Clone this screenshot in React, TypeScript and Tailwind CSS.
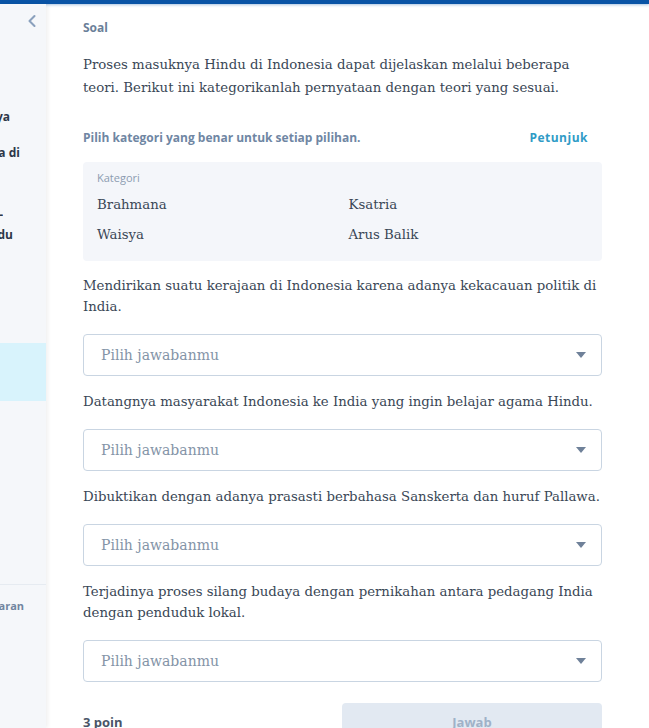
import { ChevronLeft } from "lucide-react";

const serif = "font-['DejaVu_Serif',serif]";
const sans = "font-['Open_Sans',sans-serif]";

const statements = [
  "Mendirikan suatu kerajaan di Indonesia karena adanya kekacauan politik di India.",
  "Datangnya masyarakat Indonesia ke India yang ingin belajar agama Hindu.",
  "Dibuktikan dengan adanya prasasti berbahasa Sanskerta dan huruf Pallawa.",
  "Terjadinya proses silang budaya dengan pernikahan antara pedagang India dengan penduduk lokal.",
];

function SideLine({ text, className = "" }: { text: string; className?: string }) {
  return (
    <div className={`flex justify-end overflow-hidden whitespace-nowrap ${className}`}>
      <span>{text}</span>
    </div>
  );
}

function Select() {
  return (
    <div className="flex h-[42px] items-center justify-between rounded border border-[#c9d5e2] bg-white pl-[17px] pr-[15px]">
      <span className={`${serif} text-[14px] text-[#8494a7]`}>Pilih jawabanmu</span>
      <svg width="10" height="6" viewBox="0 0 10 6">
        <path d="M0 0h10L5 6z" fill="#6f8199" />
      </svg>
    </div>
  );
}

export default function App() {
  return (
    <div className="h-[728px] w-[649px] overflow-hidden bg-white">
      <div className="h-[4px] bg-[#0a54a6] shadow-[0_1px_3px_rgba(10,84,166,0.35)]" />
      <div className="flex h-[724px]">
        {/* sidebar */}
        <aside className={`${sans} relative w-[46px] shrink-0 bg-[#f5f7fa] shadow-[2px_0_4px_rgba(0,0,0,0.06)]`}>
          <div className="flex justify-end pr-[4px] pt-[7px]">
            <ChevronLeft size={20} strokeWidth={2.5} className="text-[#8aa0bd]" />
          </div>
          <div className="pr-[36px] pt-[77px] text-[12px] font-bold text-[#2d3748]">
            <SideLine text="Kedatangan Hindu Budha ke Indonesia ya" />
          </div>
          <div className="pr-[26px] pt-[18px] text-[12px] font-bold text-[#2d3748]">
            <SideLine text="Masuknya agama Hindu Budha di Indonesia di" />
          </div>
          <div className="pr-[43px] pt-[43px] text-[12px] font-bold leading-[20px] text-[#2d3748]">
            <SideLine text="Teori -" />
          </div>
          <div className="pr-[33px] text-[12px] font-bold leading-[20px] text-[#2d3748]">
            <SideLine text="Hindu" />
          </div>
          <div className="mt-[98px] h-[58px] bg-[#d8f3fc]" />
          <div className="mt-[183px] border-t border-[#e6ebf1]" />
          <div className="pr-[22px] pt-[13px] text-[11px] font-bold text-[#7185a0]">
            <SideLine text="Ringkasan Pembelajaran" />
          </div>
        </aside>

        {/* main */}
        <main className="w-[519px] pl-[37px]">
          <div className="w-[519px]">
            <div className={`${sans} pt-[15px] text-[12px] font-bold leading-[18px] text-[#6b7f99]`}>Soal</div>
            <p className={`${serif} mt-[16px] text-[13.3px] leading-[23px] text-[#3a4756]`}>
              Proses masuknya Hindu di Indonesia dapat dijelaskan melalui beberapa teori. Berikut ini kategorikanlah pernyataan dengan teori yang sesuai.
            </p>
            <div className={`${sans} mt-[30px] flex items-center justify-between pr-[14px] text-[12px] font-bold leading-[18px]`}>
              <span className="text-[#6f86a3]">Pilih kategori yang benar untuk setiap pilihan.</span>
              <span className="tracking-[0.5px] text-[#2f9bc6]">Petunjuk</span>
            </div>
            <div className="mt-[15px] rounded bg-[#f4f6fa] px-[14px] pb-[15px] pt-[8px]">
              <div className={`${sans} text-[11px] leading-[16px] text-[#8c9cb1]`}>Kategori</div>
              <div className={`${serif} mt-[8px] grid grid-cols-2 gap-y-[8px] text-[13.3px] leading-[22px] text-[#3a4756]`}>
                <span>Brahmana</span>
                <span className="pl-[6px]">Ksatria</span>
                <span>Waisya</span>
                <span className="pl-[6px]">Arus Balik</span>
              </div>
            </div>

            {statements.map((s, i) => (
              <div key={i}>
                <p className={`${serif} ${i === 0 ? "mt-[14px]" : "mt-[15px]"} text-[13.3px] leading-[21px] text-[#3a4756]`}>{s}</p>
                <div className="mt-[17px]">
                  <Select />
                </div>
              </div>
            ))}

            <div className="mt-[21px] flex items-start justify-between">
              <span className={`${sans} pt-[10px] text-[13px] font-bold text-[#4a5568]`}>3 poin</span>
              <button className={`${sans} h-[40px] w-[260px] rounded bg-[#e2e9f2] text-[13px] font-bold text-[#9fb2c8]`}>
                Jawab
              </button>
            </div>
          </div>
        </main>
      </div>
    </div>
  );
}
